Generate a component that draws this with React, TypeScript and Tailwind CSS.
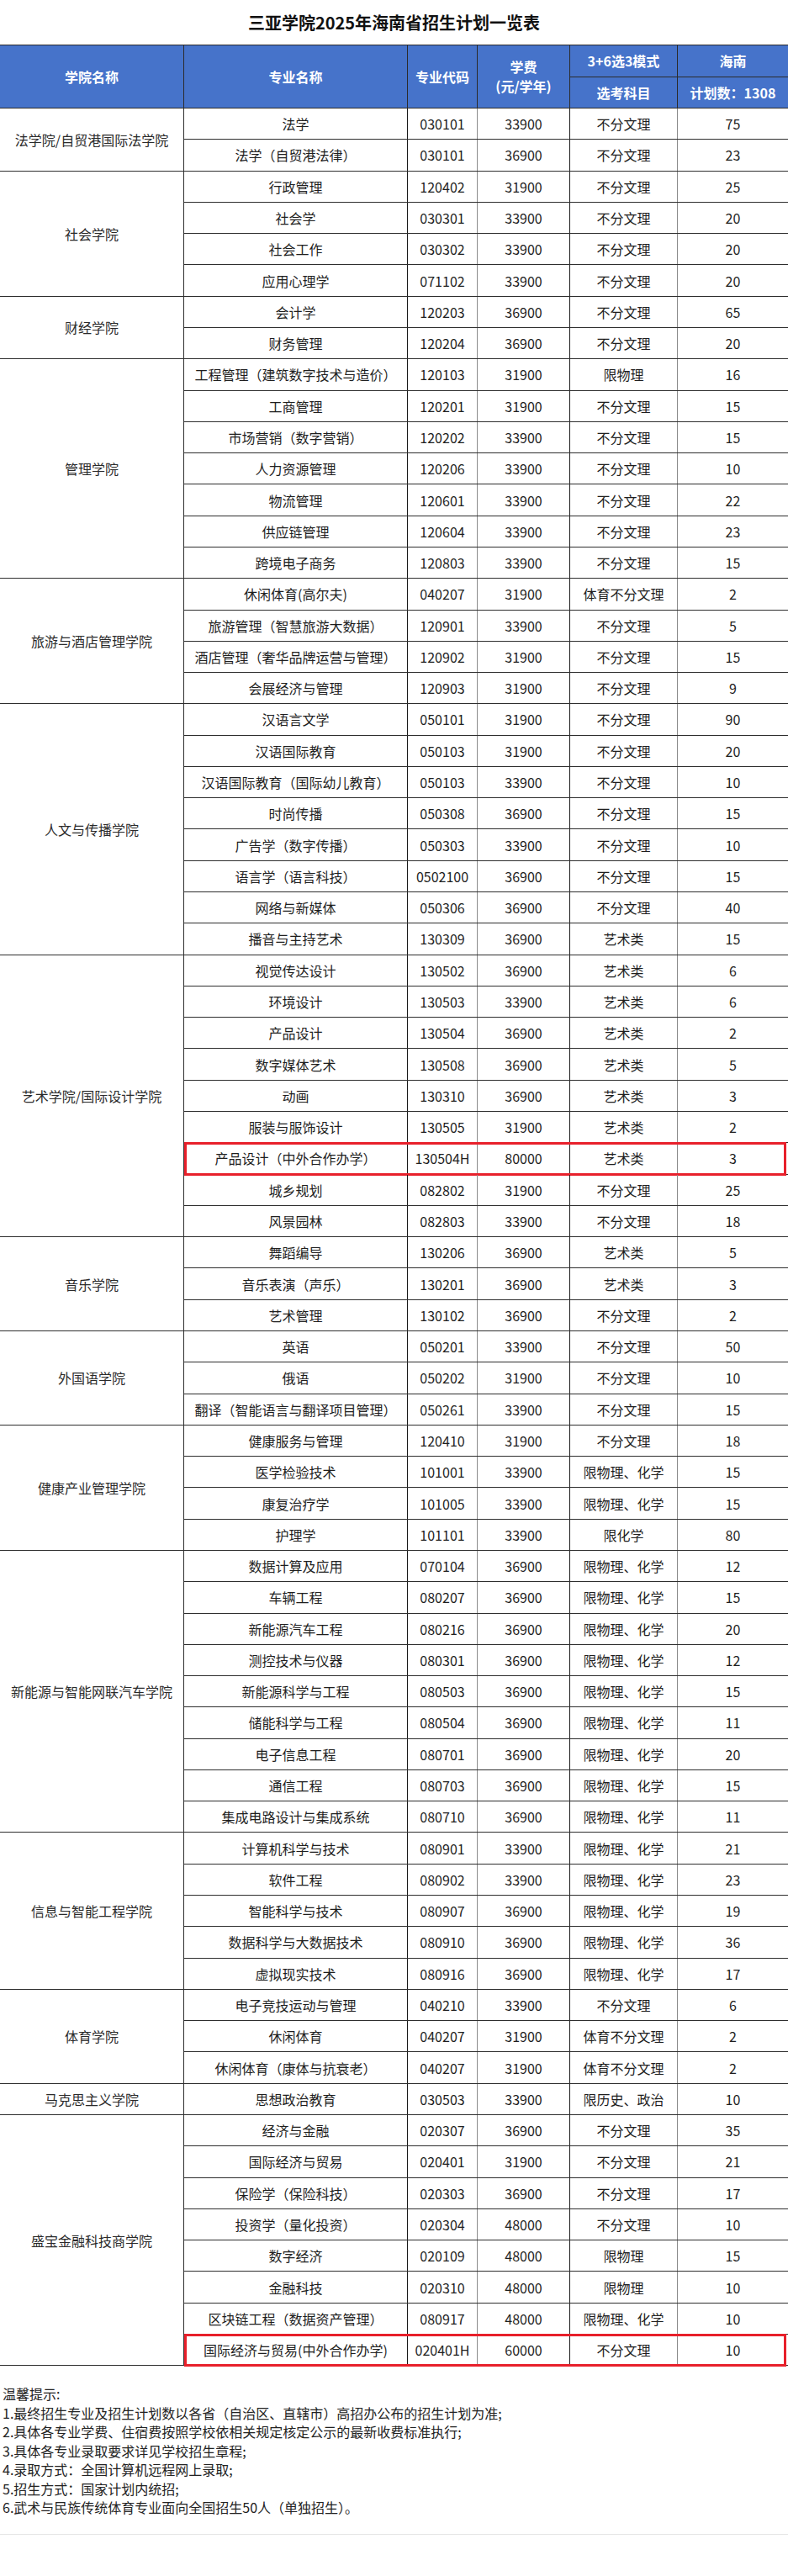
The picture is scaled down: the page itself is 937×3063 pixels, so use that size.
import React from 'react'

type Row = {
  name: string
  code: string
  fee: string
  subject: string
  count: string
  mark?: boolean
}

type Group = {
  college: string
  rows: Row[]
}

const r = (name: string, code: string, fee: string, subject: string, count: string, mark = false): Row => ({
  name,
  code,
  fee,
  subject,
  count,
  mark,
})

const groups: Group[] = [
  {
    college: '法学院/自贸港国际法学院',
    rows: [r('法学', '030101', '33900', '不分文理', '75'), r('法学（自贸港法律）', '030101', '36900', '不分文理', '23')],
  },
  {
    college: '社会学院',
    rows: [
      r('行政管理', '120402', '31900', '不分文理', '25'),
      r('社会学', '030301', '33900', '不分文理', '20'),
      r('社会工作', '030302', '33900', '不分文理', '20'),
      r('应用心理学', '071102', '33900', '不分文理', '20'),
    ],
  },
  {
    college: '财经学院',
    rows: [r('会计学', '120203', '36900', '不分文理', '65'), r('财务管理', '120204', '36900', '不分文理', '20')],
  },
  {
    college: '管理学院',
    rows: [
      r('工程管理（建筑数字技术与造价）', '120103', '31900', '限物理', '16'),
      r('工商管理', '120201', '31900', '不分文理', '15'),
      r('市场营销（数字营销）', '120202', '33900', '不分文理', '15'),
      r('人力资源管理', '120206', '33900', '不分文理', '10'),
      r('物流管理', '120601', '33900', '不分文理', '22'),
      r('供应链管理', '120604', '33900', '不分文理', '23'),
      r('跨境电子商务', '120803', '33900', '不分文理', '15'),
    ],
  },
  {
    college: '旅游与酒店管理学院',
    rows: [
      r('休闲体育(高尔夫)', '040207', '31900', '体育不分文理', '2'),
      r('旅游管理（智慧旅游大数据）', '120901', '33900', '不分文理', '5'),
      r('酒店管理（奢华品牌运营与管理）', '120902', '31900', '不分文理', '15'),
      r('会展经济与管理', '120903', '31900', '不分文理', '9'),
    ],
  },
  {
    college: '人文与传播学院',
    rows: [
      r('汉语言文学', '050101', '31900', '不分文理', '90'),
      r('汉语国际教育', '050103', '31900', '不分文理', '20'),
      r('汉语国际教育（国际幼儿教育）', '050103', '33900', '不分文理', '10'),
      r('时尚传播', '050308', '36900', '不分文理', '15'),
      r('广告学（数字传播）', '050303', '33900', '不分文理', '10'),
      r('语言学（语言科技）', '0502100', '36900', '不分文理', '15'),
      r('网络与新媒体', '050306', '36900', '不分文理', '40'),
      r('播音与主持艺术', '130309', '36900', '艺术类', '15'),
    ],
  },
  {
    college: '艺术学院/国际设计学院',
    rows: [
      r('视觉传达设计', '130502', '36900', '艺术类', '6'),
      r('环境设计', '130503', '33900', '艺术类', '6'),
      r('产品设计', '130504', '36900', '艺术类', '2'),
      r('数字媒体艺术', '130508', '36900', '艺术类', '5'),
      r('动画', '130310', '36900', '艺术类', '3'),
      r('服装与服饰设计', '130505', '31900', '艺术类', '2'),
      r('产品设计（中外合作办学）', '130504H', '80000', '艺术类', '3', true),
      r('城乡规划', '082802', '31900', '不分文理', '25'),
      r('风景园林', '082803', '33900', '不分文理', '18'),
    ],
  },
  {
    college: '音乐学院',
    rows: [
      r('舞蹈编导', '130206', '36900', '艺术类', '5'),
      r('音乐表演（声乐）', '130201', '36900', '艺术类', '3'),
      r('艺术管理', '130102', '36900', '不分文理', '2'),
    ],
  },
  {
    college: '外国语学院',
    rows: [
      r('英语', '050201', '33900', '不分文理', '50'),
      r('俄语', '050202', '31900', '不分文理', '10'),
      r('翻译（智能语言与翻译项目管理）', '050261', '33900', '不分文理', '15'),
    ],
  },
  {
    college: '健康产业管理学院',
    rows: [
      r('健康服务与管理', '120410', '31900', '不分文理', '18'),
      r('医学检验技术', '101001', '33900', '限物理、化学', '15'),
      r('康复治疗学', '101005', '33900', '限物理、化学', '15'),
      r('护理学', '101101', '33900', '限化学', '80'),
    ],
  },
  {
    college: '新能源与智能网联汽车学院',
    rows: [
      r('数据计算及应用', '070104', '36900', '限物理、化学', '12'),
      r('车辆工程', '080207', '36900', '限物理、化学', '15'),
      r('新能源汽车工程', '080216', '36900', '限物理、化学', '20'),
      r('测控技术与仪器', '080301', '36900', '限物理、化学', '12'),
      r('新能源科学与工程', '080503', '36900', '限物理、化学', '15'),
      r('储能科学与工程', '080504', '36900', '限物理、化学', '11'),
      r('电子信息工程', '080701', '36900', '限物理、化学', '20'),
      r('通信工程', '080703', '36900', '限物理、化学', '15'),
      r('集成电路设计与集成系统', '080710', '36900', '限物理、化学', '11'),
    ],
  },
  {
    college: '信息与智能工程学院',
    rows: [
      r('计算机科学与技术', '080901', '33900', '限物理、化学', '21'),
      r('软件工程', '080902', '33900', '限物理、化学', '23'),
      r('智能科学与技术', '080907', '36900', '限物理、化学', '19'),
      r('数据科学与大数据技术', '080910', '36900', '限物理、化学', '36'),
      r('虚拟现实技术', '080916', '36900', '限物理、化学', '17'),
    ],
  },
  {
    college: '体育学院',
    rows: [
      r('电子竞技运动与管理', '040210', '33900', '不分文理', '6'),
      r('休闲体育', '040207', '31900', '体育不分文理', '2'),
      r('休闲体育（康体与抗衰老）', '040207', '31900', '体育不分文理', '2'),
    ],
  },
  {
    college: '马克思主义学院',
    rows: [r('思想政治教育', '030503', '33900', '限历史、政治', '10')],
  },
  {
    college: '盛宝金融科技商学院',
    rows: [
      r('经济与金融', '020307', '36900', '不分文理', '35'),
      r('国际经济与贸易', '020401', '31900', '不分文理', '21'),
      r('保险学（保险科技）', '020303', '36900', '不分文理', '17'),
      r('投资学（量化投资）', '020304', '48000', '不分文理', '10'),
      r('数字经济', '020109', '48000', '限物理', '15'),
      r('金融科技', '020310', '48000', '限物理', '10'),
      r('区块链工程（数据资产管理）', '080917', '48000', '限物理、化学', '10'),
      r('国际经济与贸易(中外合作办学)', '020401H', '60000', '不分文理', '10', true),
    ],
  },
]

const notes = [
  '温馨提示:',
  '1.最终招生专业及招生计划数以各省（自治区、直辖市）高招办公布的招生计划为准;',
  '2.具体各专业学费、住宿费按照学校依相关规定核定公示的最新收费标准执行;',
  '3.具体各专业录取要求详见学校招生章程;',
  '4.录取方式：全国计算机远程网上录取;',
  '5.招生方式：国家计划内统招;',
  '6.武术与民族传统体育专业面向全国招生50人（单独招生）。',
]

const App: React.FC = () => {
  return (
    <div className="w-[937px] bg-white font-['Noto_Sans_CJK_SC','Noto_Sans',sans-serif] text-[#1e1e1e]">
      {/* Title */}
      <div className="h-[53px] flex items-center justify-center">
        <h1 className="text-[20px] font-bold text-[#111]">三亚学院2025年海南省招生计划一览表</h1>
      </div>

      {/* Header */}
      <div className="flex bg-[#4673ca] text-white font-bold text-[16px] border-t border-[#2b2b2b]">
        <div className="w-[219px] h-[75px] flex items-center justify-center border-r border-b border-[#2b2b2b]">
          学院名称
        </div>
        <div className="w-[266px] h-[75px] flex items-center justify-center border-r border-b border-[#2b2b2b]">
          专业名称
        </div>
        <div className="w-[83px] h-[75px] flex items-center justify-center border-r border-b border-[#2b2b2b]">
          专业代码
        </div>
        <div className="w-[110px] h-[75px] flex flex-col items-center justify-center leading-[23px] border-r border-b border-[#2b2b2b]">
          <span>学费</span>
          <span>(元/学年)</span>
        </div>
        <div className="w-[128px] flex flex-col border-r border-[#2b2b2b]">
          <div className="h-[37.5px] flex items-center justify-center border-b border-[#2b2b2b]">3+6选3模式</div>
          <div className="h-[37.5px] flex items-center justify-center border-b border-[#2b2b2b]">选考科目</div>
        </div>
        <div className="flex-1 flex flex-col">
          <div className="h-[37.5px] flex items-center justify-center border-b border-[#2b2b2b]">海南</div>
          <div className="h-[37.5px] flex items-center justify-center border-b border-[#2b2b2b]">计划数：1308</div>
        </div>
      </div>

      {/* Body */}
      <div className="text-[16px]">
        {groups.map((g) => (
          <div key={g.college} className="flex">
            <div className="w-[219px] shrink-0 flex items-center justify-center border-r border-b border-[#2e2e2e] text-[#2a2a2a]">
              {g.college}
            </div>
            <div className="flex-1 flex flex-col">
              {g.rows.map((row, i) => (
                <div key={i} className="relative flex h-[37.29px] border-b border-[#2e2e2e]">
                  <div className="w-[266px] flex items-center justify-center border-r border-[#1a1a1a] whitespace-nowrap">
                    {row.name}
                  </div>
                  <div className="w-[83px] flex items-center justify-center border-r border-[#8c8c8c]">{row.code}</div>
                  <div className="w-[110px] flex items-center justify-center border-r border-[#1a1a1a]">{row.fee}</div>
                  <div className="w-[128px] flex items-center justify-center border-r border-[#8c8c8c]">{row.subject}</div>
                  <div className="flex-1 flex items-center justify-center">{row.count}</div>
                  {row.mark && (
                    <div className="absolute left-0 right-[2px] -top-[1px] -bottom-[2px] border-[3px] border-[#e8202b] pointer-events-none" />
                  )}
                </div>
              ))}
            </div>
          </div>
        ))}
      </div>

      {/* Notes */}
      <div className="pt-[22px] pb-[20px] pl-[3px] text-[16px] leading-[22.5px] text-[#222]">
        {notes.map((n) => (
          <p key={n}>{n}</p>
        ))}
      </div>
      <div className="border-t border-[#e6e6e6] h-[51px]" />
    </div>
  )
}

export default App
